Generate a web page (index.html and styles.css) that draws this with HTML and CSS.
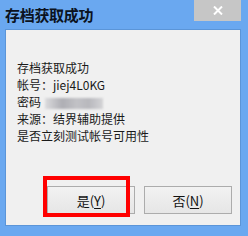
FILE: index.html
```html
<!DOCTYPE html>
<html>
<head>
    <meta charset="utf-8">
    <title>存档获取成功</title>
    <link rel="stylesheet" href="styles.css">
</head>
<body>
    <div class="win">
        <div class="bar">
            <h3>存档获取成功</h3>
            <span class="close">
                <svg width="10" height="9" viewBox="0 0 10 9"><path d="M1 0.5 L9 8.5 M9 0.5 L1 8.5" stroke="#fff" stroke-width="2"/></svg>
            </span>
        </div>
        <div class="pl">
            <div class="msg">
                <p>存档获取成功</p>
                <p>帐号：jiej4L0KG</p>
                <p>密码 <span class="blur"></span></p>
                <p>来源：结界辅助提供</p>
                <p>是否立刻测试帐号可用性</p>
            </div>
            <div class="btns">
                <button type="button" class="yes">是(<u>Y</u>)<i class="mark"></i></button>
                <button type="button">否(<u>N</u>)</button>
            </div>
        </div>
    </div>
</body>
</html>
```

FILE: styles.css
```css
html, body { margin: 0; padding: 0; height: 236px; overflow: hidden; }
body { background: #6aa8f0; font-family: "Noto Sans CJK SC", "Microsoft YaHei", sans-serif; }
.win { display: flex; flex-direction: column; height: 236px; }
.bar { height: 29px; display: flex; align-items: flex-start; justify-content: space-between; }
.bar h3 { margin: 4px 0 0 5px; font-size: 15px; line-height: 22px; font-weight: bold; color: #0b1220; letter-spacing: -0.3px; }
.close { width: 47px; height: 21px; margin-right: 7px; background: #c6c6c6; display: flex; align-items: center; justify-content: center; }
.close svg { display: block; }
.pl { margin: 0 7px 10px 5px; height: 197px; background: #f0f0f0; border: 1px solid #5b95d8; box-sizing: border-box; display: flex; flex-direction: column; }
.msg { padding: 29px 0 0 11px; font-size: 12px; color: #1a1a1a; }
.msg p { margin: 0; line-height: 17px; height: 17px; }
.blur { display: inline-block; vertical-align: middle; width: 58px; height: 11px; margin-left: 1px; background: linear-gradient(90deg, #dcdcde, #aeaeb4 30%, #c2c2c6 55%, #b8b8bd 75%, #d4d4d6); filter: blur(1.2px); }
.btns { display: flex; gap: 9px; margin-top: 42px; padding-left: 41px; }
.btns button { position: relative; width: 88px; height: 28px; padding: 0; border: 1px solid #acacac; background: linear-gradient(#f2f2f2, #e6e6e6); font-family: inherit; font-size: 13px; color: #111; }
.btns button u { text-decoration-thickness: 1px; text-underline-offset: 2px; }
.mark { position: absolute; left: -5px; top: -11px; width: 87px; height: 41px; border: 4px solid #f00; box-sizing: border-box; }
```
